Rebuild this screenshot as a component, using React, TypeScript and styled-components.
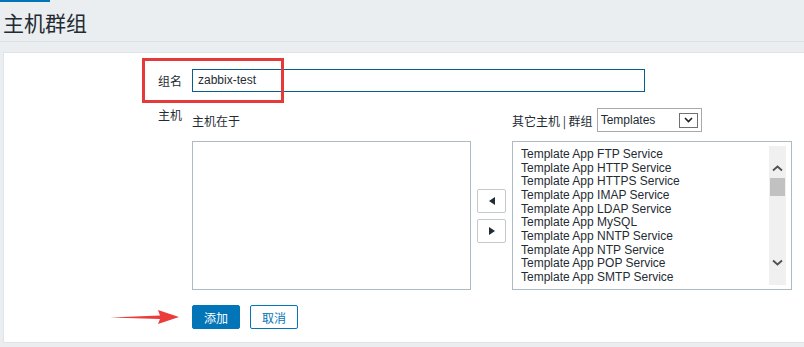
import React from "react";
import styled, { createGlobalStyle } from "styled-components";

const GlobalStyle = createGlobalStyle`
  body {
    margin: 0;
    background: #ebeef0;
    font-family: "Liberation Sans", Arial, "Noto Sans CJK SC", sans-serif;
    color: #1f2c33;
    font-size: 12px;
  }
`;

const templates = [
  "Template App FTP Service",
  "Template App HTTP Service",
  "Template App HTTPS Service",
  "Template App IMAP Service",
  "Template App LDAP Service",
  "Template App MySQL",
  "Template App NNTP Service",
  "Template App NTP Service",
  "Template App POP Service",
  "Template App SMTP Service",
];

const Page = styled.div`
  width: 804px;
  height: 347px;
  overflow: hidden;
  position: relative;
`;

const TabMark = styled.div`
  width: 50px;
  height: 2px;
  background: #0275b8;
`;

const Header = styled.div`
  height: 39px;
  border-bottom: 1px solid #dde1e4;
  display: flex;
  align-items: center;
  padding-left: 3px;
`;

const Title = styled.h1`
  margin: 0;
  font-family: "Noto Sans CJK SC", sans-serif;
  font-weight: 400;
  font-size: 21px;
  line-height: 24px;
  color: #1f2c33;
  margin-top: 1px;
`;

const Panel = styled.div`
  position: relative;
  margin: 10px 0 0 3px;
  height: 291px;
  box-sizing: border-box;
  background: #fff;
  border: 1px solid #dfe4e7;
  border-right: none;
  padding-top: 16px;
`;

const FormRow = styled.div<{ gap?: number }>`
  display: grid;
  grid-template-columns: 178px 1fr;
  column-gap: 10px;
  margin-bottom: ${(p) => p.gap ?? 16}px;
`;

const Label = styled.div<{ top?: boolean }>`
  font-family: "Noto Sans CJK SC", sans-serif;
  font-size: 12px;
  text-align: right;
  line-height: ${(p) => (p.top ? "14px" : "23px")};
  color: #1f2c33;
`;

const TextInput = styled.div`
  width: 453px;
  height: 23px;
  box-sizing: border-box;
  border: 1px solid #0a5d8c;
  padding-left: 5px;
  line-height: 21px;
  font-size: 12px;
`;

const TwinBox = styled.div`
  display: grid;
  grid-template-columns: 279px 29px 280px;
  column-gap: 6px;
  grid-template-rows: 24px 149px;
  row-gap: 9px;
`;

const BoxHeader = styled.div`
  display: flex;
  align-items: center;
  gap: 4px;
  font-family: "Noto Sans CJK SC", sans-serif;
  font-size: 12px;
`;

const SelectBox = styled.div`
  width: 105px;
  height: 24px;
  box-sizing: border-box;
  border: 1px solid #a8a8a8;
  display: flex;
  align-items: center;
  justify-content: space-between;
  padding: 0 3px 0 3px;
  font-family: "Liberation Sans", Arial, sans-serif;
  font-size: 12px;
`;

const SelectArrow = styled.div`
  width: 17px;
  height: 13px;
  border: 1px solid #707070;
  display: flex;
  align-items: center;
  justify-content: center;
`;

const ListBox = styled.div`
  box-sizing: border-box;
  border: 1px solid #acbbc2;
  background: #fff;
  position: relative;
  overflow: hidden;
`;

const ItemList = styled.div`
  padding: 6px 0 0 8px;
`;

const Item = styled.div`
  font-size: 12px;
  line-height: 13.67px;
  white-space: nowrap;
  color: #1f2c33;
`;

const Scrollbar = styled.div`
  position: absolute;
  right: 5px;
  top: 4px;
  width: 17px;
  height: 139px;
  background: #f0f0f0;
  display: flex;
  flex-direction: column;
  align-items: center;
`;

const ScrollArrow = styled.div<{ down?: boolean }>`
  height: 17px;
  width: 17px;
  margin-top: ${(p) => (p.down ? "auto" : "14px")};
  margin-bottom: ${(p) => (p.down ? "14px" : "0")};
  display: flex;
  align-items: center;
  justify-content: center;
`;

const Thumb = styled.div`
  width: 15px;
  height: 18px;
  background: #c1c1c1;
  margin-top: 1px;
`;

const MoveButtons = styled.div`
  display: flex;
  flex-direction: column;
  justify-content: center;
  gap: 6px;
  padding-top: 1px;
`;

const MoveButton = styled.div`
  height: 24px;
  box-sizing: border-box;
  border: 1px solid #c4c9cc;
  border-radius: 2px;
  background: #fff;
  display: flex;
  align-items: center;
  justify-content: center;
`;

const Actions = styled.div`
  display: flex;
  gap: 10px;
`;

const Button = styled.div<{ primary?: boolean }>`
  width: 48px;
  height: 24px;
  box-sizing: border-box;
  border-radius: 2px;
  border: 1px solid #0275b8;
  background: ${(p) => (p.primary ? "#0275b8" : "#fff")};
  color: ${(p) => (p.primary ? "#fff" : "#0275b8")};
  font-family: "Noto Sans CJK SC", sans-serif;
  font-size: 12px;
  display: flex;
  align-items: center;
  justify-content: center;
`;

const Highlight = styled.div`
  position: absolute;
  left: 138px;
  top: 5px;
  width: 142px;
  height: 45px;
  box-sizing: border-box;
  border: 3px solid #e53a3a;
  pointer-events: none;
`;

const PointerArrow = styled.svg`
  position: absolute;
  left: 104px;
  top: 255px;
`;

const Chevron = ({ down }: { down?: boolean }) => (
  <svg width="11" height="7" viewBox="0 0 11 7">
    <path
      d={down ? "M1 1.5L5.5 5.5L10 1.5" : "M1 5.5L5.5 1.5L10 5.5"}
      fill="none"
      stroke="#505050"
      strokeWidth="1.8"
    />
  </svg>
);

const Triangle = ({ left }: { left?: boolean }) => (
  <svg width="6" height="8" viewBox="0 0 6 8">
    <path d={left ? "M6 0L0 4L6 8Z" : "M0 0L6 4L0 8Z"} fill="#1f2c33" />
  </svg>
);

export default function App() {
  return (
    <Page>
      <GlobalStyle />
      <TabMark />
      <Header>
        <Title>主机群组</Title>
      </Header>
      <Panel>
        <FormRow>
          <Label>组名</Label>
          <TextInput>zabbix-test</TextInput>
        </FormRow>
        <FormRow gap={15}>
          <Label top>主机</Label>
          <TwinBox>
            <BoxHeader>主机在于</BoxHeader>
            <div />
            <BoxHeader>
              其它主机 | 群组
              <SelectBox>
                Templates
                <SelectArrow>
                  <svg width="9" height="6" viewBox="0 0 9 6">
                    <path d="M1 1L4.5 4.5L8 1" fill="none" stroke="#1f1f1f" strokeWidth="1.6" />
                  </svg>
                </SelectArrow>
              </SelectBox>
            </BoxHeader>
            <ListBox />
            <MoveButtons>
              <MoveButton>
                <Triangle left />
              </MoveButton>
              <MoveButton>
                <Triangle />
              </MoveButton>
            </MoveButtons>
            <ListBox>
              <ItemList>
                {templates.map((t) => (
                  <Item key={t}>{t}</Item>
                ))}
              </ItemList>
              <Scrollbar>
                <ScrollArrow>
                  <Chevron />
                </ScrollArrow>
                <Thumb />
                <ScrollArrow down>
                  <Chevron down />
                </ScrollArrow>
              </Scrollbar>
            </ListBox>
          </TwinBox>
        </FormRow>
        <FormRow gap={0}>
          <div />
          <Actions>
            <Button primary>添加</Button>
            <Button>取消</Button>
          </Actions>
        </FormRow>
        <Highlight />
        <PointerArrow width="72" height="18" viewBox="0 0 72 18">
          <path d="M2 9.5L52 7.5L50 2L71 9L50 16L52 11Z" fill="#ec3b3b" />
        </PointerArrow>
      </Panel>
    </Page>
  );
}
